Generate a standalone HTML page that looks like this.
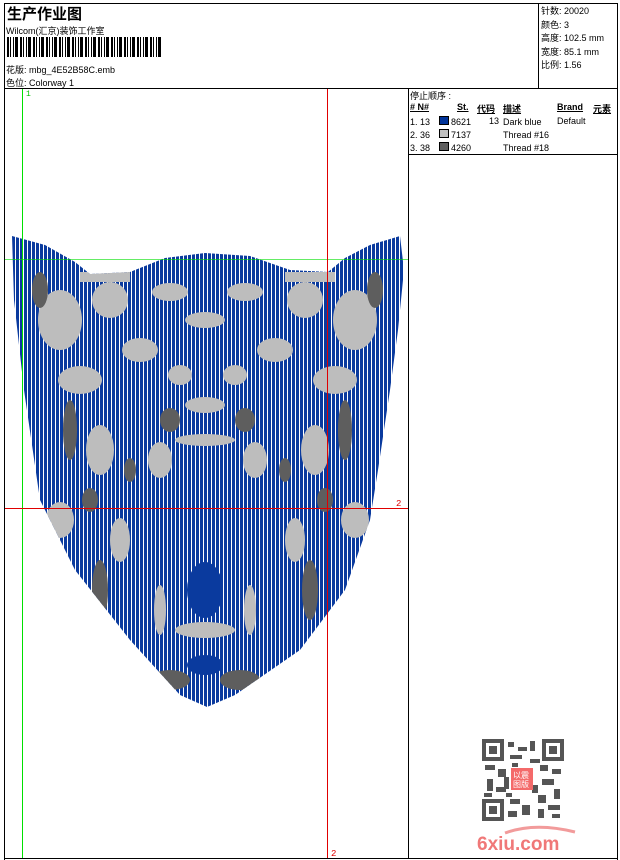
<!DOCTYPE html>
<html><head><meta charset="utf-8"><style>
body{margin:0;width:620px;height:860px;background:#fff;position:relative;overflow:hidden;font-family:"Liberation Sans","Noto Sans CJK SC",sans-serif;font-size:9px;color:#000}
.a{position:absolute}
.l{position:absolute;background:#000}
</style></head><body>
<div class="l" style="left:4px;top:3px;width:614px;height:1px"></div>
<div class="l" style="left:4px;top:3px;width:1px;height:857px"></div>
<div class="l" style="left:617px;top:3px;width:1px;height:857px"></div>
<div class="l" style="left:4px;top:858px;width:614px;height:1px"></div>
<div class="l" style="left:4px;top:88px;width:614px;height:1px"></div>
<div class="l" style="left:538px;top:3px;width:1px;height:86px"></div>
<div class="l" style="left:408px;top:88px;width:1px;height:771px"></div>
<div class="l" style="left:408px;top:154px;width:210px;height:1px"></div>
<div class="a" style="left:7px;top:3px;font-size:15px;font-weight:bold">生产作业图</div>
<div class="a" style="left:6px;top:24px">Wilcom(汇京)装饰工作室</div>
<div class="a" style="left:7px;top:37px;width:155px;height:20px;background:repeating-linear-gradient(90deg,#000 0 2px,#fff 2px 3px,#000 3px 4px,#fff 4px 6px,#000 6px 7px,#fff 7px 8px,#000 8px 11px,#fff 11px 13px)"></div>
<div class="a" style="left:6px;top:63px">花版: mbg_4E52B58C.emb</div>
<div class="a" style="left:6px;top:76px">色位: Colorway 1</div>
<div class="a" style="left:541px;top:5px;line-height:13.5px">针数: 20020<br>颜色: 3<br>高度: 102.5 mm<br>宽度: 85.1 mm<br>比例: 1.56</div>
<div class="a" style="left:410px;top:89px">停止顺序 :</div>
<div class="a" style="left:410px;top:102px;font-weight:bold;text-decoration:underline;white-space:pre"># N#</div>
<div class="a" style="left:457px;top:102px;font-weight:bold;text-decoration:underline">St.</div>
<div class="a" style="left:477px;top:102px;font-weight:bold;text-decoration:underline">代码</div>
<div class="a" style="left:503px;top:102px;font-weight:bold;text-decoration:underline">描述</div>
<div class="a" style="left:557px;top:102px;font-weight:bold;text-decoration:underline">Brand</div>
<div class="a" style="left:593px;top:102px;font-weight:bold;text-decoration:underline">元素</div>
<div class="a" style="left:410px;top:116px;line-height:13px;white-space:pre">1. 13<br>2. 36<br>3. 38</div>
<div class="a" style="left:439px;top:116px;width:10px;height:9px;background:#003399;border:1px solid #000;box-sizing:border-box"></div>
<div class="a" style="left:439px;top:129px;width:10px;height:9px;background:#c0c0c0;border:1px solid #000;box-sizing:border-box"></div>
<div class="a" style="left:439px;top:142px;width:10px;height:9px;background:#606060;border:1px solid #000;box-sizing:border-box"></div>
<div class="a" style="left:451px;top:116px;line-height:13px">8621<br>7137<br>4260</div>
<div class="a" style="left:489px;top:116px">13</div>
<div class="a" style="left:503px;top:116px;line-height:13px">Dark blue<br>Thread #16<br>Thread #18</div>
<div class="a" style="left:557px;top:116px">Default</div>

<svg class="a" style="left:0;top:0" width="620" height="860">
<defs>
<pattern id="st" width="4" height="6" patternUnits="userSpaceOnUse"><rect width="4" height="6" fill="#fff"/><rect width="3" height="6" fill="#0a3a9e"/></pattern>
<clipPath id="hc"><path d="M12,236 L45,245 L75,262 L90,274 L130,272 L165,258 L205,253 L250,256 L290,270 L328,272 L345,258 L370,245 L400,236 L404,270 L398,330 L390,390 L378,470 L370,520 L345,590 L300,650 L235,695 L207,707 L180,695 L130,640 L75,570 L40,500 L24,390 L14,300 Z"/></clipPath>
</defs>
<g clip-path="url(#hc)">
<rect x="0" y="230" width="410" height="480" fill="url(#st)"/>
<g fill="#bdbdbd">
<rect x="80" y="272" width="50" height="10"/><rect x="285" y="272" width="50" height="10"/>
<ellipse cx="60" cy="320" rx="22" ry="30"/><ellipse cx="355" cy="320" rx="22" ry="30"/>
<ellipse cx="110" cy="300" rx="18" ry="18"/><ellipse cx="305" cy="300" rx="18" ry="18"/>
<ellipse cx="170" cy="292" rx="18" ry="9"/><ellipse cx="245" cy="292" rx="18" ry="9"/>
<ellipse cx="205" cy="320" rx="20" ry="8"/>
<ellipse cx="140" cy="350" rx="18" ry="12"/><ellipse cx="275" cy="350" rx="18" ry="12"/>
<ellipse cx="80" cy="380" rx="22" ry="14"/><ellipse cx="335" cy="380" rx="22" ry="14"/>
<ellipse cx="180" cy="375" rx="12" ry="10"/><ellipse cx="235" cy="375" rx="12" ry="10"/>
<ellipse cx="205" cy="405" rx="20" ry="8"/>
<ellipse cx="100" cy="450" rx="14" ry="25"/><ellipse cx="315" cy="450" rx="14" ry="25"/>
<ellipse cx="160" cy="460" rx="12" ry="18"/><ellipse cx="255" cy="460" rx="12" ry="18"/>
<ellipse cx="205" cy="440" rx="30" ry="6"/>
<ellipse cx="60" cy="520" rx="14" ry="18"/><ellipse cx="355" cy="520" rx="14" ry="18"/>
<ellipse cx="120" cy="540" rx="10" ry="22"/><ellipse cx="295" cy="540" rx="10" ry="22"/>
<ellipse cx="160" cy="610" rx="6" ry="25"/><ellipse cx="250" cy="610" rx="6" ry="25"/>
<ellipse cx="205" cy="630" rx="30" ry="8"/>
</g>
<g fill="#5e5e5e">
<ellipse cx="40" cy="290" rx="8" ry="18"/><ellipse cx="375" cy="290" rx="8" ry="18"/>
<ellipse cx="70" cy="430" rx="7" ry="30"/><ellipse cx="345" cy="430" rx="7" ry="30"/>
<ellipse cx="170" cy="420" rx="10" ry="12"/><ellipse cx="245" cy="420" rx="10" ry="12"/>
<ellipse cx="130" cy="470" rx="6" ry="12"/><ellipse cx="285" cy="470" rx="6" ry="12"/>
<ellipse cx="90" cy="500" rx="8" ry="12"/><ellipse cx="325" cy="500" rx="8" ry="12"/>
<ellipse cx="100" cy="590" rx="8" ry="30"/><ellipse cx="310" cy="590" rx="8" ry="30"/>
<ellipse cx="170" cy="680" rx="20" ry="10"/><ellipse cx="240" cy="680" rx="20" ry="10"/>
</g>
<ellipse cx="205" cy="590" rx="18" ry="28" fill="#0a3a9e"/>
<ellipse cx="205" cy="665" rx="18" ry="10" fill="#0a3a9e"/>
</g>
<line x1="22.5" y1="89" x2="22.5" y2="858" stroke="#00e000"/>
<line x1="5" y1="259.5" x2="408" y2="259.5" stroke="#00e000" opacity=".6"/>
<line x1="327.5" y1="89" x2="327.5" y2="858" stroke="#e00000"/>
<line x1="5" y1="508.5" x2="408" y2="508.5" stroke="#e00000"/>
<text x="26" y="96" fill="#00c000" font-size="8" font-family="Liberation Mono,monospace">1</text>
<text x="396" y="506" fill="#e00000" font-size="9" font-family="Liberation Mono,monospace">2</text>
<text x="331" y="856" fill="#e00000" font-size="9" font-family="Liberation Mono,monospace">2</text>
<g transform="translate(482,739)">
<rect width="82" height="82" fill="#fff"/>
<rect x="0" y="0" width="18" height="18" fill="none" stroke="#555" stroke-width="4" transform="translate(2,2)"/>
<rect x="7" y="7" width="8" height="8" fill="#555"/>
<rect x="62" y="2" width="18" height="18" fill="none" stroke="#555" stroke-width="4"/>
<rect x="67" y="7" width="8" height="8" fill="#555"/>
<rect x="2" y="62" width="18" height="18" fill="none" stroke="#555" stroke-width="4"/>
<rect x="7" y="67" width="8" height="8" fill="#555"/>
<g fill="#555"><rect x="26" y="3" width="6" height="5"/><rect x="36" y="8" width="9" height="4"/><rect x="48" y="2" width="5" height="10"/><rect x="28" y="16" width="12" height="4"/><rect x="3" y="26" width="10" height="5"/><rect x="16" y="30" width="8" height="8"/><rect x="5" y="40" width="6" height="12"/><rect x="14" y="48" width="10" height="5"/><rect x="58" y="26" width="8" height="6"/><rect x="70" y="30" width="9" height="5"/><rect x="60" y="40" width="12" height="6"/><rect x="72" y="50" width="6" height="10"/><rect x="56" y="56" width="8" height="8"/><rect x="28" y="60" width="10" height="5"/><rect x="40" y="66" width="8" height="10"/><rect x="26" y="72" width="9" height="6"/><rect x="56" y="70" width="6" height="9"/><rect x="66" y="66" width="12" height="5"/><rect x="70" y="75" width="8" height="4"/><rect x="48" y="20" width="10" height="4"/><rect x="22" y="38" width="5" height="12"/><rect x="50" y="46" width="6" height="8"/><rect x="30" y="24" width="6" height="4"/><rect x="2" y="54" width="8" height="4"/><rect x="24" y="54" width="6" height="4"/></g>
<rect x="29" y="29" width="22" height="22" fill="#f46a6a"/>
<text x="31" y="39" fill="#fff" font-size="8">以震</text>
<text x="31" y="48" fill="#fff" font-size="8">图版</text>
</g>
<path d="M505,833 Q535,822 575,832" stroke="#f29b9b" stroke-width="3" fill="none"/>
<text x="477" y="850" fill="#f07878" font-size="19" font-weight="bold" font-family="Liberation Sans,sans-serif">6xiu.com</text>
</svg>
</body></html>
